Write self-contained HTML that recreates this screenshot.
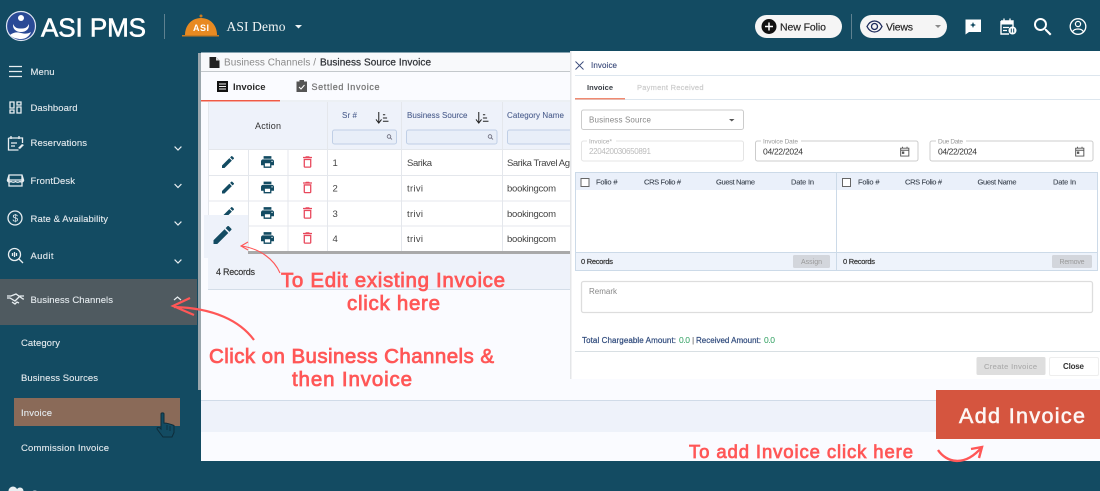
<!DOCTYPE html>
<html lang="en"><head><meta charset="utf-8"><title>ASI PMS - Invoice</title>
<style>
html,body{margin:0;padding:0;width:1100px;height:491px;overflow:hidden;background:#134b62}
svg{display:block;font-family:"Liberation Sans",sans-serif}
#page{filter:blur(.3px)}
.side{fill:#e4eaee;font-size:9.500px;stroke:#e4eaee;stroke-width:.12px}
.th{fill:#4a5d8c;font-size:8px;stroke:#4a5d8c;stroke-width:.08px}
.td{fill:#444;font-size:9.500px}
.mh{fill:#39424e;font-size:7.500px;stroke:#39424e;stroke-width:.1px}
.red{fill:#ff5757;font-size:20.500px;stroke:#ff5757;stroke-width:.75px}
.ico{fill:none;stroke:#e8eef1;stroke-width:1.300}
</style></head><body>
<svg id="page" width="1100" height="491" viewBox="0 0 1100 491" xmlns="http://www.w3.org/2000/svg">
<defs>
<symbol id="pen" viewBox="3 3 18 18"><path d="M3 17.250V21h3.750L17.810 9.940l-3.750-3.750L3 17.250zM20.710 7.040a1 1 0 0 0 0-1.410l-2.340-2.340a1 1 0 0 0-1.410 0l-1.830 1.830 3.750 3.750 1.830-1.830z" fill="#134b62"/></symbol>
<symbol id="prt" viewBox="2 3 20 18"><path d="M19 8H5c-1.660 0-3 1.340-3 3v6h4v4h12v-4h4v-6c0-1.660-1.340-3-3-3zm-3 11H8v-5h8v5zm3-7c-.55 0-1-.45-1-1s.45-1 1-1 1 .45 1 1-.45 1-1 1zm-1-9H6v4h12V3z" fill="#134b62"/></symbol>
<symbol id="del" viewBox="5 3 14 18"><path d="M6 19c0 1.100.9 2 2 2h8c1.100 0 2-.9 2-2V7H6v12zM8 9h8v10H8V9zm7.500-5l-1-1h-5l-1 1H5v2h14V4h-3.500z" fill="#e8485c"/></symbol>
<symbol id="cal" viewBox="0 0 10 11"><path d="M.7 2h8.600v8.300H.7zM.7 4.200h8.600M2.600.5v2M7.400.5v2" fill="none" stroke="#555" stroke-width="1"/><rect x="2" y="5.500" width="2.500" height="2.500" fill="#555"/></symbol>
<symbol id="sort" viewBox="0 0 15 13"><path d="M4 0v11M1 8l3 4 3-4" fill="none" stroke="#222" stroke-width="1.100"/><path d="M8.500 3h2.500M8.500 6.500h4.500M8.500 10h6" stroke="#222" stroke-width="1.100"/></symbol>
<symbol id="chev" viewBox="0 0 8 5"><path d="M.6.6 4 4 7.400.6" fill="none" stroke="#e8eef1" stroke-width="1.200"/></symbol>
</defs>

<rect width="1100" height="491" fill="#134b62"/>

<!-- Header -->
<circle cx="21" cy="26" r="14.500" fill="#2a4a96" stroke="#dfe6f2" stroke-width="1.200"/>
<circle cx="21" cy="18" r="3" fill="#fff"/>
<path d="M13 24c2 4 4 4.500 8 4.500s6-.5 8-4.500c.5 5-3 8-8 8s-8.500-3-8-8z" fill="#fff"/>
<path d="M10 35c4-3 7-3 11-2s7 1 10-1c-2 5-6 7-10 7s-8-1-11-4z" fill="#fff"/>
<text x="41" y="36.500" font-size="26" fill="#fff" stroke="#fff" stroke-width=".6" textLength="105">ASI PMS</text>
<rect x="164" y="14" width="1" height="25" fill="#5e8190"/>
<path d="M185 35c0-10 7-17 16-17s16 7 16 17z" fill="#e88a22"/>
<rect x="182" y="35" width="37" height="1.500" fill="#c97a20"/>
<circle cx="201" cy="16" r="1.500" fill="#c97a20"/>
<text x="193" y="31" font-size="9" font-weight="700" fill="#fff" textLength="16">ASI</text>
<text x="226.500" y="31" font-family="Liberation Serif" font-size="13.500" fill="#f0f4f5" textLength="59">ASI Demo</text>
<path d="M295 25h7l-3.500 3.500z" fill="#eef3f5"/>

<rect x="755" y="15" width="87" height="23" rx="11.500" fill="#f5f5f5"/>
<circle cx="769" cy="26.500" r="7.500" fill="#111"/>
<path d="M765 26.500h8M769 22.500v8" stroke="#fff" stroke-width="1.500"/>
<text x="780" y="30.500" font-size="10.500" fill="#222" stroke="#222" stroke-width=".15" textLength="46">New Folio</text>
<rect x="851" y="14" width="1" height="25" fill="#5e8190"/>
<rect x="860" y="15" width="87" height="23" rx="11.500" fill="#f5f5f5"/>
<path d="M867 26.500c2-4 5-5.500 7.500-5.500s5.500 1.500 7.500 5.500c-2 4-5 5.500-7.500 5.500s-5.500-1.500-7.500-5.500z" fill="none" stroke="#1d2b5c" stroke-width="1.300"/>
<circle cx="874.500" cy="26.500" r="3" fill="none" stroke="#1d2b5c" stroke-width="1.300"/>
<text x="886" y="30.500" font-size="10.500" fill="#222" stroke="#222" stroke-width=".15" textLength="27">Views</text>
<path d="M935 25h6l-3 3z" fill="#8a8a8a"/>

<path d="M965.500 19.500h15.500v12.500h-12l-3.500 2.500z" fill="#fff"/>
<path d="M973 22l.9 2.100 2.100.9-2.100.9-.9 2.100-.9-2.100-2.100-.9 2.100-.9z" fill="#134b62"/>
<path d="M1001 21h12v8M1001 21v13h8" fill="none" stroke="#fff" stroke-width="1.400"/>
<path d="M1001 21h12v3.500h-12z" fill="#fff"/>
<path d="M1004 18.500v3M1010 18.500v3M1003 27.500h6M1003 30.500h4" stroke="#fff" stroke-width="1.300"/>
<circle cx="1012.500" cy="30.500" r="4" fill="#fff"/>
<path d="M1011.300 28.500v4M1013.700 28.500v4" stroke="#134b62" stroke-width="1"/>
<svg x="1034" y="18" width="18" height="18" viewBox="3 3 18 18"><path d="M15.500 14h-.79l-.28-.27A6.470 6.470 0 0 0 16 9.500 6.500 6.500 0 1 0 9.500 16c1.610 0 3.090-.59 4.230-1.570l.27.28v.79l5 4.990L20.490 19l-4.990-5zm-6 0C7.010 14 5 11.990 5 9.500S7.010 5 9.500 5 14 7.010 14 9.500 11.990 14 9.500 14z" fill="#fff"/></svg>
<circle cx="1078" cy="26.500" r="7.800" fill="none" stroke="#fff" stroke-width="1.300"/>
<circle cx="1078" cy="24" r="2.600" fill="none" stroke="#fff" stroke-width="1.200"/>
<path d="M1072.500 32c1-2.500 3-3 5.500-3s4.500.5 5.500 3" fill="none" stroke="#fff" stroke-width="1.200"/>

<!-- Sidebar -->
<path d="M9 66.500h13M9 71.500h13M9 76.500h13" stroke="#e8eef1" stroke-width="1.300"/>
<text class="side" x="30.500" y="75" textLength="24">Menu</text>
<path class="ico" d="M10 102h4v6h-4zM10 110h4v3h-4zM17 102h4v3h-4zM17 107h4v6h-4z"/>
<text class="side" x="30.500" y="111" textLength="47">Dashboard</text>
<path class="ico" d="M8.500 138h14v5M8.500 138v12h10M11 136v3M19 136v3M11 143h6M11 146h4"/>
<path d="M18 148l4-4 2 1-4 4z" fill="#e8eef1"/>
<text class="side" x="30.500" y="146" textLength="56.500">Reservations</text>
<path class="ico" d="M9 175h13l1.500 5h-16zM9 175v11h13v-11M7.500 180c0 2 2 2.500 3.500 1.500 1.500 1 3 1 4.500 0 1.500 1 3 1 4.500 0 1.500 1 3.500.5 3.500-1.500"/>
<text class="side" x="30.500" y="184" textLength="44.500">FrontDesk</text>
<circle class="ico" cx="15" cy="218" r="7"/>
<text x="12.500" y="221.500" font-size="10" fill="#e8eef1">$</text>
<text class="side" x="30.500" y="222" textLength="77.500">Rate &amp; Availability</text>
<circle class="ico" cx="14.500" cy="254.500" r="6"/>
<path class="ico" d="M19 259l4 4M12.500 253v3M14.500 252v5M16.500 253v3"/>
<text class="side" x="30.500" y="259" textLength="23">Audit</text>
<use href="#chev" x="174" y="146" width="8" height="5"/>
<use href="#chev" x="174" y="183.500" width="8" height="5"/>
<use href="#chev" x="174" y="221" width="8" height="5"/>
<use href="#chev" x="174" y="259" width="8" height="5"/>
<rect x="0" y="279" width="197" height="46" fill="#4f5a60"/>
<path class="ico" d="M7 296h4l5-2 7 5 1 0M24 296h-4l-5 5-5-3H7M12 302l3 2 2-2 2 1"/>
<text class="side" x="30.500" y="303" textLength="82.500">Business Channels</text>
<path d="M174 300l3.500-3 3.500 3" fill="none" stroke="#e8eef1" stroke-width="1.200"/>

<text class="side" x="21" y="346" textLength="39">Category</text>
<text class="side" x="21" y="381" textLength="77">Business Sources</text>
<rect x="14" y="398" width="166" height="28" fill="#8a6a58"/>
<text class="side" x="21" y="416" textLength="31">Invoice</text>
<text class="side" x="21" y="451" textLength="88">Commission Invoice</text>
<path d="M161 414c0-1.500 3-1.500 3 0v9c2 0 7 1 10 2.500v7l-2 4.500h-9l-6-8c0-2 2-2 3-1l1 1z" fill="#134b62" stroke="#0e2c3a" stroke-width="1"/>
<path d="M167 425v5M170 426v5" stroke="#0e2c3a" stroke-width=".8"/>
<circle cx="13" cy="491" r="4.500" fill="#e8eef1"/><circle cx="20" cy="491" r="3.500" fill="#e8eef1"/>
<text class="side" x="31" y="497" textLength="25">Guest</text>

<!-- Main panel -->
<rect x="198" y="53" width="3" height="337" fill="#9aa6ac"/>
<rect x="201" y="51" width="899" height="410" fill="#fafbff"/>
<rect x="198" y="51" width="372" height="1.500" fill="#134b62"/>
<rect x="201" y="53" width="369" height="18" fill="#f8f9fb"/>
<rect x="201" y="71" width="369" height="1" fill="#c3c8cc"/>
<path d="M209.500 57h6.500l3.500 3.500V68h-10z" fill="#222"/>
<path d="M216 57v3.500h3.500z" fill="#ddd"/>
<text x="224" y="65.500" font-size="10" fill="#8a8a8a" textLength="92">Business Channels /</text>
<text x="320" y="65.500" font-size="10" fill="#303338" stroke="#303338" stroke-width=".25" textLength="111">Business Source Invoice</text>

<rect x="217" y="81" width="11" height="11" fill="#111"/>
<path d="M219 84h7M219 86.500h7M219 89h7" stroke="#eee" stroke-width=".9"/>
<text x="233" y="90" font-size="9.500" font-weight="700" fill="#2b2b2b" textLength="32.500">Invoice</text>
<rect x="296.500" y="81.500" width="10.500" height="10.500" fill="#555"/>
<rect x="299.500" y="80" width="4.500" height="2.500" fill="#555"/>
<path d="M299 87l2 2 3.500-4" fill="none" stroke="#fff" stroke-width="1"/>
<text x="311.500" y="90" font-size="9" fill="#777" stroke="#777" stroke-width=".25" textLength="68">Settled Invoice</text>
<rect x="201" y="100" width="79" height="1.500" fill="#ef5a45"/>
<rect x="280" y="100.500" width="290" height="1" fill="#dfe4ea"/>

<!-- Table -->
<rect x="209" y="102" width="361" height="47" fill="#eef2fa"/>
<rect x="209" y="149" width="361" height="102" fill="#fff"/>
<path d="M209 149.500h361M209 175.500h361M209 201h361M209 226h361M208.500 102v152M248.500 149v102M288 149v102M327.500 102v149M401.500 102v149M502.500 102v149" stroke="#e4e7ec" stroke-width="1" fill="none"/>
<text x="255" y="129" font-size="9" fill="#333" textLength="26">Action</text>
<text class="th" x="342" y="118" textLength="15">Sr #</text>
<use href="#sort" x="375" y="112" width="14" height="12"/>
<rect x="332.500" y="130" width="64" height="14" rx="2" fill="#e8eef8" stroke="#c0cfe6"/>
<text class="th" x="407" y="118" textLength="60.500">Business Source</text>
<use href="#sort" x="475" y="112" width="14" height="12"/>
<rect x="406.500" y="130" width="90.500" height="14" rx="2" fill="#e8eef8" stroke="#c0cfe6"/>
<text class="th" x="507" y="118" textLength="57">Category Name</text>
<rect x="507.500" y="130" width="70" height="14" rx="2" fill="#e8eef8" stroke="#c0cfe6"/>
<g fill="none" stroke="#667" stroke-width=".8"><circle cx="389" cy="136.500" r="1.800"/><path d="M390.300 137.800l1.700 1.700"/><circle cx="490" cy="136.500" r="1.800"/><path d="M491.300 137.800l1.700 1.700"/></g>

<use href="#pen" x="222" y="156" width="12" height="12"/>
<use href="#pen" x="222" y="181.500" width="12" height="12"/>
<use href="#pen" x="222" y="207" width="12" height="12"/>
<use href="#prt" x="261" y="156" width="13" height="12"/>
<use href="#prt" x="261" y="181.500" width="13" height="12"/>
<use href="#prt" x="261" y="207" width="13" height="12"/>
<use href="#prt" x="261" y="232" width="13" height="12"/>
<use href="#del" x="303" y="156" width="9" height="12"/>
<use href="#del" x="303" y="181.500" width="9" height="12"/>
<use href="#del" x="303" y="207" width="9" height="12"/>
<use href="#del" x="303" y="232" width="9" height="12"/>

<text class="td" x="332.500" y="166">1</text><text class="td" x="407" y="166" textLength="25">Sarika</text><text class="td" x="507" y="166" textLength="63">Sarika Travel Ag</text>
<text class="td" x="332.500" y="191.500">2</text><text class="td" x="407" y="191.500" textLength="16">trivi</text><text class="td" x="507" y="191.500" textLength="49">bookingcom</text>
<text class="td" x="332.500" y="217">3</text><text class="td" x="407" y="217" textLength="16">trivi</text><text class="td" x="507" y="217" textLength="49">bookingcom</text>
<text class="td" x="332.500" y="242">4</text><text class="td" x="407" y="242" textLength="16">trivi</text><text class="td" x="507" y="242" textLength="49">bookingcom</text>

<rect x="209" y="251" width="361" height="3" fill="#a9a9a9"/>
<rect x="208" y="254" width="362" height="35" fill="#eef2fa"/>
<rect x="208" y="289" width="362" height="1" fill="#d3dde8"/>
<text x="216" y="275" font-size="9" fill="#333" stroke="#333" stroke-width=".15" textLength="39">4 Records</text>
<rect x="204" y="215" width="44" height="43" fill="#eef2fa"/>
<use href="#pen" x="213" y="226" width="19" height="18"/>

<!-- Lower strip -->
<rect x="201" y="400" width="899" height="1" fill="#d0dbe8"/>
<rect x="201" y="401" width="899" height="31" fill="#eef2fa"/>

<!-- Modal -->
<rect x="570" y="51" width="530" height="328" fill="#fff"/>
<rect x="570" y="51" width="1.500" height="328" fill="#e4e6e8"/>
<path d="M575.500 61.500l8 8M583.500 61.500l-8 8" stroke="#3a4a7a" stroke-width=".9"/>
<text x="591" y="68" font-size="8" fill="#3a4a7a" stroke="#3a4a7a" stroke-width=".12" textLength="26">Invoice</text>
<rect x="575" y="75" width="525" height="1" fill="#dde6ee"/>
<text x="587" y="90" font-size="7.500" font-weight="700" fill="#3a3f46" textLength="26">Invoice</text>
<text x="637" y="90" font-size="7.500" fill="#ccc" stroke="#ccc" stroke-width=".2" textLength="66.500">Payment Received</text>
<rect x="575" y="99" width="525" height="1" fill="#dde6ee"/>
<rect x="575" y="98" width="50" height="1.500" fill="#f08a70"/>

<rect x="581.500" y="110" width="162" height="19.500" rx="2" fill="#fff" stroke="#ccc"/>
<text x="589" y="122.500" font-size="8" fill="#888" textLength="62">Business Source</text>
<path d="M729 119h5.500l-2.750 2.500z" fill="#555"/>

<rect x="581.500" y="141" width="162" height="20" rx="2" fill="#fff" stroke="#e4e4e4"/>
<rect x="587" y="139" width="29" height="4" fill="#fff"/>
<text x="589" y="143.500" font-size="6.500" fill="#aaa" textLength="23">Invoice*</text>
<text x="589" y="154" font-size="8" fill="#bbb" textLength="62">220420030650891</text>

<rect x="755.500" y="141" width="162.500" height="20" rx="2" fill="#fff" stroke="#ccc"/>
<rect x="761" y="139" width="40" height="4" fill="#fff"/>
<text x="763" y="143.500" font-size="6.500" fill="#999" textLength="35">Invoice Date</text>
<text x="763" y="154.500" font-size="8.500" fill="#333" textLength="40">04/22/2024</text>
<use href="#cal" x="900" y="146" width="9.500" height="11"/>

<rect x="930" y="141" width="163" height="20" rx="2" fill="#fff" stroke="#ccc"/>
<rect x="936" y="139" width="30" height="4" fill="#fff"/>
<text x="938" y="143.500" font-size="6.500" fill="#999" textLength="25">Due Date</text>
<text x="938" y="154.500" font-size="8.500" fill="#333" textLength="39">04/22/2024</text>
<use href="#cal" x="1075" y="146" width="9.500" height="11"/>

<rect x="575" y="172" width="523" height="18" fill="#eaf0fa"/>
<rect x="575" y="252" width="523" height="19" fill="#eef3fb"/>
<rect x="575.500" y="172.500" width="522" height="98" fill="none" stroke="#ccdae8"/>
<path d="M575 252.500h523M836.500 172v99" stroke="#ccdae8" fill="none"/>
<rect x="581" y="178.500" width="8" height="8" fill="#fff" stroke="#666"/>
<rect x="842.500" y="178.500" width="8" height="8" fill="#fff" stroke="#666"/>
<text class="mh" x="596" y="184.500" textLength="21.500">Folio #</text>
<text class="mh" x="644" y="184.500" textLength="37">CRS Folio #</text>
<text class="mh" x="716" y="184.500" textLength="39">Guest Name</text>
<text class="mh" x="791" y="184.500" textLength="23">Date In</text>
<text class="mh" x="858" y="184.500" textLength="21.500">Folio #</text>
<text class="mh" x="905" y="184.500" textLength="37">CRS Folio #</text>
<text class="mh" x="977.500" y="184.500" textLength="39">Guest Name</text>
<text class="mh" x="1053" y="184.500" textLength="23">Date In</text>

<text x="581" y="264" font-size="7.500" fill="#333" stroke="#333" stroke-width=".2" textLength="32">0 Records</text>
<rect x="793" y="255" width="37" height="13" rx="1.500" fill="#d3d6dc"/>
<text x="801" y="264" font-size="7" fill="#999" textLength="21">Assign</text>
<text x="843" y="264" font-size="7.500" fill="#333" stroke="#333" stroke-width=".2" textLength="32">0 Records</text>
<rect x="1052" y="255" width="40" height="13" rx="1.500" fill="#d3d6dc"/>
<text x="1059.500" y="264" font-size="7" fill="#999" textLength="25">Remove</text>

<rect x="581.500" y="281.500" width="511" height="31" rx="2" fill="#fff" stroke="#ddd" stroke-width="1.300"/>
<text x="589" y="294" font-size="8" fill="#888" textLength="28">Remark</text>

<text x="582" y="343" font-size="8" fill="#2f4a7c" stroke="#2f4a7c" stroke-width=".2" textLength="94">Total Chargeable Amount:</text>
<text x="679" y="343" font-size="8.500" fill="#2a9d5c" textLength="11">0.0</text>
<text x="692" y="343" font-size="8.500" fill="#555">|</text>
<text x="696" y="343" font-size="8" fill="#2f4a7c" stroke="#2f4a7c" stroke-width=".2" textLength="65">Received Amount:</text>
<text x="764" y="343" font-size="8.500" fill="#2a9d5c" textLength="11">0.0</text>
<rect x="575" y="351" width="525" height="1" fill="#d8dfe3"/>

<rect x="976.500" y="357" width="69" height="18" rx="1.500" fill="#dedede"/>
<text x="984" y="369" font-size="7.500" fill="#aaa" stroke="#aaa" stroke-width=".1" textLength="53">Create Invoice</text>
<rect x="1049.500" y="357.500" width="49" height="18" rx="1.500" fill="#fff" stroke="#eee"/>
<text x="1063" y="369" font-size="8" font-weight="700" fill="#333" textLength="21">Close</text>

<!-- Add invoice -->
<rect x="936" y="390" width="164" height="49" fill="#d5553f"/>
<text x="959" y="423" font-size="21.500" fill="#fdf6f4" stroke="#fdf6f4" stroke-width=".6" textLength="126">Add Invoice</text>

<!-- Annotations -->
<text class="red" x="281" y="287" textLength="224">To Edit existing Invoice</text>
<text class="red" x="347" y="310" textLength="93">click here</text>
<text class="red" x="209" y="363" textLength="285">Click on Business Channels &amp;</text>
<text class="red" x="292" y="386" textLength="120">then Invoice</text>
<text class="red" x="689" y="458" style="font-size:18.500px" textLength="224">To add Invoice click here</text>
<path d="M280 273c-6-14-20-24-38-27M248 242l-7 4 7 4" fill="none" stroke="#ff5757" stroke-width="1.100"/>
<path d="M254 340c-14-19-40-32-80-33M190 298l-17 8 21 9" fill="none" stroke="#ff5757" stroke-width="2.200"/>
<path d="M938 450c8 12 26 18 44-3M971 449l11-2-3 11" fill="none" stroke="#ff5757" stroke-width="2.400"/>
</svg>
</body></html>
